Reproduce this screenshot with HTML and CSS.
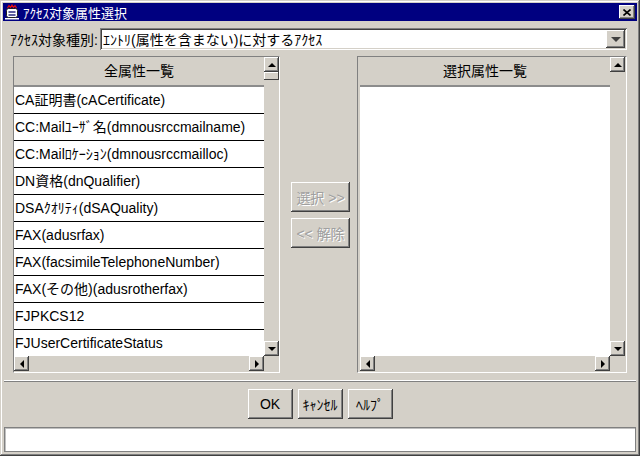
FILE: index.html
```html
<!DOCTYPE html>
<html lang="ja">
<head>
  <meta charset="UTF-8">
  <title>ｱｸｾｽ対象属性選択</title>
  <link rel="stylesheet" href="styles.css">
</head>
<body>
  <div class="window">
    <div class="titlebar">
      <svg class="app-icon" viewBox="0 0 16 16" width="16" height="16">
        <path d="M3.5 4 L5 1.5 L6.5 3.5 L8 1 L9.5 3.5 L11 1.5 L12.5 4" stroke="#e01010" stroke-width="1.2" fill="none"/>
        <rect x="2.5" y="4.5" width="11" height="9" rx="2" fill="#fff" stroke="#202020"/>
        <rect x="4.5" y="7" width="7" height="2" fill="#6060a0"/>
        <rect x="4.5" y="10" width="7" height="2" fill="#6060a0"/>
        <rect x="1" y="14" width="14" height="1.5" fill="#fff"/>
      </svg>
      <span class="title">ｱｸｾｽ対象属性選択</span>
      <button class="close-btn">
        <svg viewBox="0 0 8 7" width="8" height="7"><path d="M0.5 0.5 L7.5 6.5 M7.5 0.5 L0.5 6.5" stroke="#000" stroke-width="1.6"/></svg>
      </button>
    </div>

    <div class="type-row">
      <span class="type-label">ｱｸｾｽ対象種別:</span>
      <div class="combo">
        <span class="combo-text">ｴﾝﾄﾘ(属性を含まない)に対するｱｸｾｽ</span>
        <span class="combo-btn"><i class="arrow arrow-combo"></i></span>
      </div>
    </div>

    <div class="panels">
      <!-- 全属性 -->
      <div class="panel panel-left">
        <div class="list">
          <div class="list-head">全属性一覧</div>
          <div class="list-row">CA証明書(cACertificate)</div>
          <div class="list-row">CC:Mailﾕｰｻﾞ名(dmnousrccmailname)</div>
          <div class="list-row">CC:Mailﾛｹｰｼｮﾝ(dmnousrccmailloc)</div>
          <div class="list-row">DN資格(dnQualifier)</div>
          <div class="list-row">DSAｸｵﾘﾃｨ(dSAQuality)</div>
          <div class="list-row">FAX(adusrfax)</div>
          <div class="list-row">FAX(facsimileTelephoneNumber)</div>
          <div class="list-row">FAX(その他)(adusrotherfax)</div>
          <div class="list-row">FJPKCS12</div>
          <div class="list-row">FJUserCertificateStatus</div>
        </div>
        <div class="vscroll">
          <span class="sb-btn"><i class="arrow arrow-up"></i></span>
          <span class="sb-thumb"></span>
          <span class="sb-track"></span>
          <span class="sb-btn"><i class="arrow arrow-down"></i></span>
        </div>
        <div class="hscroll">
          <span class="sb-btn"><i class="arrow arrow-left"></i></span>
          <span class="sb-btn"><i class="arrow arrow-right"></i></span>
        </div>
        <div class="corner"></div>
      </div>

      <div class="middle">
        <button class="btn btn-move" disabled>選択 &gt;&gt;</button>
        <button class="btn btn-move" disabled>&lt;&lt; 解除</button>
      </div>

      <!-- 選択属性 -->
      <div class="panel panel-right">
        <div class="list">
          <div class="list-head">選択属性一覧</div>
        </div>
        <div class="vscroll">
          <span class="sb-btn"><i class="arrow arrow-up"></i></span>
          <span class="sb-track"></span>
          <span class="sb-btn"><i class="arrow arrow-down"></i></span>
        </div>
        <div class="hscroll">
          <span class="sb-btn"><i class="arrow arrow-left"></i></span>
          <span class="sb-btn"><i class="arrow arrow-right"></i></span>
        </div>
        <div class="corner"></div>
      </div>
    </div>

    <div class="separator"></div>

    <div class="actions">
      <button class="btn">OK</button>
      <button class="btn">ｷｬﾝｾﾙ</button>
      <button class="btn">ﾍﾙﾌﾟ</button>
    </div>

    <div class="status"></div>
  </div>
</body>
</html>
```

FILE: styles.css
```css
body {
  margin: 0;
  background: #d4d0c8;
  font-family: "Liberation Sans", "Noto Sans CJK JP", sans-serif;
  font-size: 14px;
  color: #000;
}

.window {
  width: 640px;
  height: 456px;
  box-sizing: border-box;
  padding: 3px;
  display: flex;
  flex-direction: column;
  background: #d4d0c8;
  box-shadow: inset -1px -1px #404040, inset 1px 1px #d4d0c8,
              inset -2px -2px #808080, inset 2px 2px #fff;
}

/* タイトルバー */
.titlebar {
  height: 18px;
  flex: none;
  background: #000080;
  color: #fff;
  display: flex;
  align-items: center;
  padding: 0 2px 0 1px;
}

.app-icon {
  flex: none;
}

.title {
  flex: 1;
  margin-left: 3px;
  font-size: 13px;
  white-space: nowrap;
}

.close-btn {
  width: 16px;
  height: 14px;
  padding: 0;
  border: 0;
  background: #d4d0c8;
  display: flex;
  align-items: center;
  justify-content: center;
  box-shadow: inset -1px -1px #404040, inset 1px 1px #fff,
              inset -2px -2px #808080;
}

/* 種別 */
.type-row {
  display: flex;
  align-items: center;
  height: 22px;
  margin: 7px 10px 0 7px;
}

.type-label {
  width: 90px;
  flex: none;
  white-space: nowrap;
}

.combo {
  flex: 1;
  height: 22px;
  box-sizing: border-box;
  padding: 2px;
  background: #fff;
  display: flex;
  align-items: center;
  box-shadow: inset 1px 1px #808080, inset -1px -1px #fff,
              inset 2px 2px #404040, inset -2px -2px #d4d0c8;
}

.combo-text {
  flex: 1;
  padding-left: 1px;
  white-space: nowrap;
}

.combo-btn {
  width: 19px;
  height: 18px;
  flex: none;
  background: #d4d0c8;
  display: flex;
  align-items: center;
  justify-content: center;
  box-shadow: inset -1px -1px #404040, inset 1px 1px #fff,
              inset -2px -2px #808080;
}

/* 矢印 */
.arrow {
  display: block;
  width: 0;
  height: 0;
}
.arrow-combo {
  border-left: 5px solid transparent;
  border-right: 5px solid transparent;
  border-top: 5px solid #404040;
  margin-top: 1px;
}
.arrow-up {
  border-left: 4px solid transparent;
  border-right: 4px solid transparent;
  border-bottom: 4px solid #000;
}
.arrow-down {
  border-left: 4px solid transparent;
  border-right: 4px solid transparent;
  border-top: 4px solid #000;
}
.arrow-left {
  border-top: 4px solid transparent;
  border-bottom: 4px solid transparent;
  border-right: 4px solid #000;
}
.arrow-right {
  border-top: 4px solid transparent;
  border-bottom: 4px solid transparent;
  border-left: 4px solid #000;
}

/* パネル */
.panels {
  display: flex;
  height: 317px;
  flex: none;
  margin: 6px 10px 0;
}

.panel {
  box-sizing: border-box;
  border: 1px solid;
  border-color: #808080 #fff #fff #808080;
  display: grid;
  grid-template-rows: 1fr 16px;
  overflow: hidden;
}

.panel-left {
  width: 267px;
  grid-template-columns: 250px 1fr;
}

.panel-right {
  width: 270px;
  grid-template-columns: 250px 15px;
  padding: 0 1px 0 2px;
}

.list {
  background: #fff;
  overflow: hidden;
  min-height: 0;
}

.list-head {
  height: 28px;
  line-height: 28px;
  text-align: center;
  background: #d4d0c8;
  border-bottom: 2px solid #8c8c8c;
}

.list-row {
  height: 26px;
  line-height: 26px;
  padding-left: 1px;
  border-bottom: 1px solid #000;
  white-space: nowrap;
}

.vscroll {
  display: flex;
  flex-direction: column;
  min-height: 0;
}

.hscroll {
  display: flex;
  justify-content: space-between;
  align-items: flex-start;
}

.sb-btn {
  width: 15px;
  height: 15px;
  flex: none;
  background: #d4d0c8;
  display: flex;
  align-items: center;
  justify-content: center;
  box-shadow: inset -1px -1px #404040, inset 1px 1px #fff,
              inset -2px -2px #808080;
}

.sb-thumb {
  width: 15px;
  height: 8px;
  flex: none;
  box-shadow: inset -1px -1px #404040, inset 1px 1px #fff;
}

.sb-track {
  flex: 1;
}

/* 中央ボタン */
.middle {
  flex: 1;
  display: flex;
  flex-direction: column;
  justify-content: center;
  align-items: flex-start;
  gap: 6px;
  padding-left: 11px;
}

.btn {
  width: 45px;
  height: 30px;
  padding: 0;
  border: 0;
  font: inherit;
  color: #000;
  background: #d4d0c8;
  white-space: nowrap;
  box-shadow: inset -1px -1px #404040, inset 1px 1px #fff,
              inset -2px -2px #808080;
}

.btn-move {
  width: 59px;
}

.btn:disabled {
  color: #a0a0a0;
  text-shadow: 1px 1px #fff;
}

.separator {
  flex: none;
  margin: 7px 1px 0;
  border-top: 1px solid #fff;
  border-bottom: 1px solid #808080;
}

.actions {
  display: flex;
  justify-content: center;
  gap: 5px;
  margin-top: 7px;
}

.status {
  height: 25px;
  flex: none;
  margin: 8px 1px 0;
  background: #fff;
  box-sizing: border-box;
  border: 1px solid #808080;
  box-shadow: inset 1px 1px #c0c0c0;
}
```
